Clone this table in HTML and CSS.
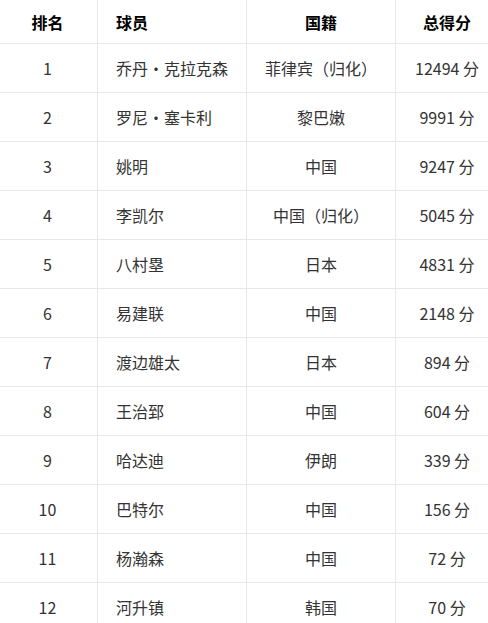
FILE: index.html
```html
<!DOCTYPE html>
<html lang="zh-CN">
<head>
<meta charset="utf-8">
<title>总得分排名</title>
<link rel="stylesheet" href="styles.css">
</head>
<body>
<div class="table" role="table">
  <div class="row head" role="row">
    <div class="cell rank" role="columnheader">排名</div>
    <div class="cell name" role="columnheader">球员</div>
    <div class="cell nat" role="columnheader">国籍</div>
    <div class="cell pts" role="columnheader">总得分</div>
  </div>
  <div class="row" role="row"><div class="cell rank">1</div><div class="cell name">乔丹·克拉克森</div><div class="cell nat">菲律宾（归化）</div><div class="cell pts">12494 分</div></div>
  <div class="row" role="row"><div class="cell rank">2</div><div class="cell name">罗尼·塞卡利</div><div class="cell nat">黎巴嫩</div><div class="cell pts">9991 分</div></div>
  <div class="row" role="row"><div class="cell rank">3</div><div class="cell name">姚明</div><div class="cell nat">中国</div><div class="cell pts">9247 分</div></div>
  <div class="row" role="row"><div class="cell rank">4</div><div class="cell name">李凯尔</div><div class="cell nat">中国（归化）</div><div class="cell pts">5045 分</div></div>
  <div class="row" role="row"><div class="cell rank">5</div><div class="cell name">八村塁</div><div class="cell nat">日本</div><div class="cell pts">4831 分</div></div>
  <div class="row" role="row"><div class="cell rank">6</div><div class="cell name">易建联</div><div class="cell nat">中国</div><div class="cell pts">2148 分</div></div>
  <div class="row" role="row"><div class="cell rank">7</div><div class="cell name">渡边雄太</div><div class="cell nat">日本</div><div class="cell pts">894 分</div></div>
  <div class="row" role="row"><div class="cell rank">8</div><div class="cell name">王治郅</div><div class="cell nat">中国</div><div class="cell pts">604 分</div></div>
  <div class="row" role="row"><div class="cell rank">9</div><div class="cell name">哈达迪</div><div class="cell nat">伊朗</div><div class="cell pts">339 分</div></div>
  <div class="row" role="row"><div class="cell rank">10</div><div class="cell name">巴特尔</div><div class="cell nat">中国</div><div class="cell pts">156 分</div></div>
  <div class="row" role="row"><div class="cell rank">11</div><div class="cell name">杨瀚森</div><div class="cell nat">中国</div><div class="cell pts">72 分</div></div>
  <div class="row" role="row"><div class="cell rank">12</div><div class="cell name">河升镇</div><div class="cell nat">韩国</div><div class="cell pts">70 分</div></div>
</div>
</body>
</html>
```
FILE: styles.css
```css
html, body {
  margin: 0;
  padding: 0;
  background: #fff;
  overflow: hidden;
}
body {
  font-family: "Microsoft YaHei", "Noto Sans CJK SC", "Noto Sans", sans-serif;
  font-size: 16px;
  color: #333;
}
.table {
  display: grid;
  width: 498px;
}
.row {
  display: grid;
  grid-template-columns: 98px 149px 149px 102px;
  height: 49px;
}
.row.head {
  height: 44px;
}
.cell {
  box-sizing: border-box;
  border-right: 1px solid #e8e8e8;
  border-bottom: 1px solid #e8e8e8;
  display: flex;
  align-items: center;
  justify-content: center;
  white-space: nowrap;
}
.cell.pts {
  border-right: none;
}
.cell.rank {
  padding-right: 2px;
}
.cell.name {
  justify-content: flex-start;
  padding-left: 18px;
}
.head .cell {
  font-weight: bold;
  color: #000;
}
```
